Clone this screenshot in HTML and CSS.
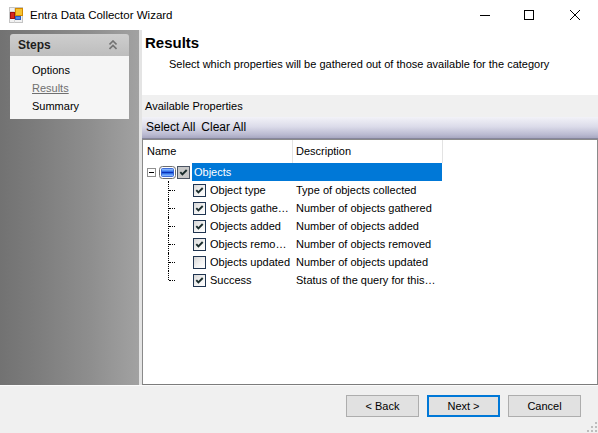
FILE: index.html
```html
<!DOCTYPE html>
<html>
<head>
<meta charset="utf-8">
<title>Entra Data Collector Wizard</title>
<link rel="stylesheet" href="styles.css">
</head>
<body>
<div class="window">
  <div class="titlebar">
    <svg class="app-icon" width="16" height="16" viewBox="0 0 16 16">
      <rect x="1.5" y="0.5" width="13" height="15" fill="#f2f2f2" stroke="#c4c4c4"/>
      <line x1="1.5" y1="4.5" x2="14.5" y2="4.5" stroke="#d6d6d6"/>
      <line x1="6.5" y1="0.5" x2="6.5" y2="15.5" stroke="#d6d6d6"/>
      <rect x="2.5" y="5.5" width="4" height="6" fill="#d8261f" stroke="#a01010"/>
      <rect x="7.5" y="1.5" width="7" height="7" fill="#f6c232" stroke="#d38a00"/>
      <rect x="7.5" y="9.5" width="5" height="3" fill="#4f86e6" stroke="#2a5cc0"/>
    </svg>
    <span class="title">Entra Data Collector Wizard</span>
    <div class="controls">
      <span class="ctl ctl-min"><svg width="10" height="10" viewBox="0 0 10 10"><line x1="0" y1="5.5" x2="10" y2="5.5" stroke="#000"/></svg></span>
      <span class="ctl"><svg width="10" height="10" viewBox="0 0 10 10"><rect x="0.5" y="0.5" width="9" height="9" fill="none" stroke="#000"/></svg></span>
      <span class="ctl"><svg width="10" height="10" viewBox="0 0 10 10"><path d="M0 0 L10 10 M10 0 L0 10" stroke="#000" stroke-width="1"/></svg></span>
    </div>
  </div>

  <div class="main">
    <aside class="sidebar">
      <div class="steps">
        <div class="steps-head">
          <span>Steps</span>
          <svg width="8" height="10" viewBox="0 0 8 10"><path d="M0.5 4.5 L4 1 L7.5 4.5 M0.5 9 L4 5.5 L7.5 9" fill="none" stroke="#727272" stroke-width="1.6"/></svg>
        </div>
        <ul class="steps-list">
          <li>Options</li>
          <li class="current">Results</li>
          <li>Summary</li>
        </ul>
      </div>
    </aside>
    <div class="strip"></div>
    <section class="content">
      <header class="page-head">
        <h1>Results</h1>
        <p>Select which properties will be gathered out of those available for the category</p>
      </header>
      <div class="band">Available Properties</div>
      <div class="toolbar"><span>Select All</span><span>Clear All</span></div>
      <div class="list">
        <div class="list-head">
          <div class="col-name">Name</div>
          <div class="col-desc">Description</div>
        </div>
        <div class="row root">
          <span class="expander"></span>
          <svg class="group-icon" width="17" height="13" viewBox="0 0 17 13">
            <defs>
              <linearGradient id="bluebar" x1="0" y1="0" x2="0" y2="1">
                <stop offset="0" stop-color="#a8d0ff"/>
                <stop offset="0.35" stop-color="#3a7cf2"/>
                <stop offset="0.5" stop-color="#0b2fb4"/>
                <stop offset="0.65" stop-color="#3a7cf2"/>
                <stop offset="1" stop-color="#a8d0ff"/>
              </linearGradient>
            </defs>
            <rect x="0.5" y="0.5" width="16" height="12" rx="3" fill="#ffffff" stroke="#6e6e6e"/>
            <rect x="2.5" y="2.5" width="12" height="8" rx="1" fill="url(#bluebar)" stroke="#1d4fcf" stroke-width="0.8"/>
          </svg>
          <span class="cb cb-root"><svg width="11" height="11" viewBox="0 0 11 11"><path d="M2.3 5.2 L4.4 7.4 L8.7 3" fill="none" stroke="#1a2c2c" stroke-width="1.9"/></svg></span>
          <span class="sel">Objects</span>
        </div>
        <div class="row child">
          <span class="tree"></span>
          <span class="cb"><svg width="11" height="11" viewBox="0 0 11 11"><path d="M2.3 5.2 L4.4 7.4 L8.7 3" fill="none" stroke="#1a2c2c" stroke-width="1.9"/></svg></span>
          <span class="name">Object type</span>
          <span class="desc">Type of objects collected</span>
        </div>
        <div class="row child">
          <span class="tree"></span>
          <span class="cb"><svg width="11" height="11" viewBox="0 0 11 11"><path d="M2.3 5.2 L4.4 7.4 L8.7 3" fill="none" stroke="#1a2c2c" stroke-width="1.9"/></svg></span>
          <span class="name">Objects gathe…</span>
          <span class="desc">Number of objects gathered</span>
        </div>
        <div class="row child">
          <span class="tree"></span>
          <span class="cb"><svg width="11" height="11" viewBox="0 0 11 11"><path d="M2.3 5.2 L4.4 7.4 L8.7 3" fill="none" stroke="#1a2c2c" stroke-width="1.9"/></svg></span>
          <span class="name">Objects added</span>
          <span class="desc">Number of objects added</span>
        </div>
        <div class="row child">
          <span class="tree"></span>
          <span class="cb"><svg width="11" height="11" viewBox="0 0 11 11"><path d="M2.3 5.2 L4.4 7.4 L8.7 3" fill="none" stroke="#1a2c2c" stroke-width="1.9"/></svg></span>
          <span class="name">Objects remo…</span>
          <span class="desc">Number of objects removed</span>
        </div>
        <div class="row child">
          <span class="tree"></span>
          <span class="cb"></span>
          <span class="name">Objects updated</span>
          <span class="desc">Number of objects updated</span>
        </div>
        <div class="row child last">
          <span class="tree"></span>
          <span class="cb"><svg width="11" height="11" viewBox="0 0 11 11"><path d="M2.3 5.2 L4.4 7.4 L8.7 3" fill="none" stroke="#1a2c2c" stroke-width="1.9"/></svg></span>
          <span class="name">Success</span>
          <span class="desc">Status of the query for this…</span>
        </div>
      </div>
    </section>
  </div>

  <footer class="footer">
    <button class="btn">&lt; Back</button>
    <button class="btn primary">Next &gt;</button>
    <button class="btn">Cancel</button>
    <svg class="grip" width="12" height="12" viewBox="0 0 12 12">
      <rect x="9" y="1" width="2" height="2" fill="#bdbdbd"/>
      <rect x="9" y="5" width="2" height="2" fill="#bdbdbd"/>
      <rect x="5" y="5" width="2" height="2" fill="#bdbdbd"/>
      <rect x="9" y="9" width="2" height="2" fill="#bdbdbd"/>
      <rect x="5" y="9" width="2" height="2" fill="#bdbdbd"/>
      <rect x="1" y="9" width="2" height="2" fill="#bdbdbd"/>
    </svg>
  </footer>
</div>
</body>
</html>
```

FILE: styles.css
```css
html, body {
  margin: 0;
  padding: 0;
}

body {
  width: 598px;
  height: 433px;
  overflow: hidden;
  background: #f0f0f0;
  font-family: "Liberation Sans", Arial, sans-serif;
  font-size: 11px;
  color: #000;
}

.window {
  width: 598px;
  height: 433px;
  display: flex;
  flex-direction: column;
}

/* Title bar */
.titlebar {
  height: 30px;
  flex: none;
  background: #fff;
  display: flex;
  align-items: center;
}

.app-icon {
  margin-left: 8px;
  display: block;
}

.title {
  margin-left: 6px;
  font-size: 11.5px;
  color: #000;
}

.controls {
  margin-left: auto;
  display: flex;
  height: 30px;
}

.ctl {
  width: 46px;
  height: 30px;
  display: flex;
  align-items: center;
  justify-content: center;
}

.ctl svg {
  display: block;
}

.ctl-min svg {
  margin-left: 4px;
}

/* Main area */
.main {
  height: 355px;
  flex: none;
  display: flex;
}

.sidebar {
  width: 139px;
  flex: none;
  box-sizing: border-box;
  padding: 4px 0 0 10px;
  background: linear-gradient(to right, #727272 0%, #7c7c7c 25%, #8e8e8e 65%, #a2a2a2 100%);
}

.steps {
  width: 119px;
}

.steps-head {
  height: 22px;
  box-sizing: border-box;
  padding: 0 12px 0 8px;
  display: flex;
  align-items: center;
  justify-content: space-between;
  background: linear-gradient(#cecece, #bdbdbd);
  border-radius: 3px 3px 0 0;
  font-weight: bold;
  font-size: 12px;
  color: #1e1e1e;
}

.steps-head svg {
  display: block;
}

.steps-list {
  list-style: none;
  margin: 0;
  padding: 5px 0 4px 22px;
  background: #f5f5f5;
}

.steps-list li {
  line-height: 18px;
  color: #000;
}

.steps-list li.current {
  color: #6f6f6f;
  text-decoration: underline;
}

.strip {
  width: 3px;
  flex: none;
  background: #e4e4e4;
}

.content {
  flex: 1;
  display: flex;
  flex-direction: column;
  background: #fff;
  min-width: 0;
}

.page-head {
  height: 65px;
  flex: none;
  box-sizing: border-box;
  padding: 4px 0 0 3px;
  background: #fff;
}

.page-head h1 {
  margin: 0;
  font-size: 15px;
  line-height: 18px;
  font-weight: bold;
}

.page-head p {
  margin: 6px 0 0 24px;
  line-height: 13px;
}

.band {
  height: 22px;
  flex: none;
  line-height: 22px;
  padding-left: 3px;
  background: #f0f0f0;
}

.toolbar {
  height: 21px;
  flex: none;
  line-height: 21px;
  padding-left: 4px;
  display: flex;
  gap: 6px;
  font-size: 12px;
  background: linear-gradient(#f2f2f8 0%, #dcdcea 45%, #b9b9d0 85%, #a7a7c0 100%);
  border-bottom: 1px solid #86869c;
}

/* List view */
.list {
  flex: 1;
  background: #fff;
  border: 1px solid #8a8a8a;
  border-bottom-color: #7c7c7c;
}

.list-head {
  display: flex;
  height: 23px;
  line-height: 23px;
}

.col-name {
  width: 150px;
  box-sizing: border-box;
  padding-left: 4px;
  border-right: 1px solid #e3e3e3;
}

.col-desc {
  width: 150px;
  box-sizing: border-box;
  padding-left: 3px;
  border-right: 1px solid #e3e3e3;
}

.row {
  height: 18px;
  line-height: 18px;
  display: flex;
  align-items: center;
  white-space: nowrap;
}

.expander {
  width: 9px;
  height: 9px;
  box-sizing: border-box;
  margin-left: 4px;
  border: 1px solid #8f8f8f;
  background: #fff;
  position: relative;
  flex: none;
}

.expander::after {
  content: "";
  position: absolute;
  left: 1px;
  top: 3px;
  width: 5px;
  height: 1px;
  background: #000;
}

.group-icon {
  margin-left: 3px;
  display: block;
  flex: none;
}

.cb {
  width: 13px;
  height: 13px;
  box-sizing: border-box;
  border: 1px solid #1f3450;
  background: linear-gradient(135deg, #d6d6d6 0%, #f2f2f2 55%, #ffffff 100%);
  display: flex;
  align-items: center;
  justify-content: center;
  flex: none;
}

.cb svg {
  display: block;
}

.cb-root {
  margin-left: 1px;
  border-color: #4c5563;
  background: #c8c8c8;
}

.sel {
  margin-left: 2px;
  width: 250px;
  height: 18px;
  box-sizing: border-box;
  padding-left: 2px;
  background: #0078d7;
  color: #fff;
}

.tree {
  width: 25px;
  height: 18px;
  margin-left: 25px;
  position: relative;
  flex: none;
}

.tree::before {
  content: "";
  position: absolute;
  left: 0;
  top: 0;
  bottom: 0;
  border-left: 1px dotted #000;
}

.row.last .tree::before {
  bottom: 9px;
}

.tree::after {
  content: "";
  position: absolute;
  left: 1px;
  top: 9px;
  width: 6px;
  border-top: 1px dotted #000;
}

.name {
  margin-left: 4px;
  width: 83px;
  overflow: hidden;
  flex: none;
}

.desc {
  padding-left: 3px;
}

/* Footer */
.footer {
  height: 48px;
  flex: none;
  box-sizing: border-box;
  border-top: 1px solid #fbfbfb;
  padding: 9px 17px 0 0;
  display: flex;
  justify-content: flex-end;
  align-items: flex-start;
  gap: 8px;
  background: #f0f0f0;
  position: relative;
}

.btn {
  width: 73px;
  height: 22px;
  box-sizing: border-box;
  margin: 0;
  padding: 0;
  border: 1px solid #adadad;
  background: #e1e1e1;
  font-family: "Liberation Sans", Arial, sans-serif;
  font-size: 11px;
  color: #000;
}

.btn.primary {
  border: 2px solid #0078d7;
}

.grip {
  position: absolute;
  right: 0;
  bottom: 0;
  display: block;
}
```
